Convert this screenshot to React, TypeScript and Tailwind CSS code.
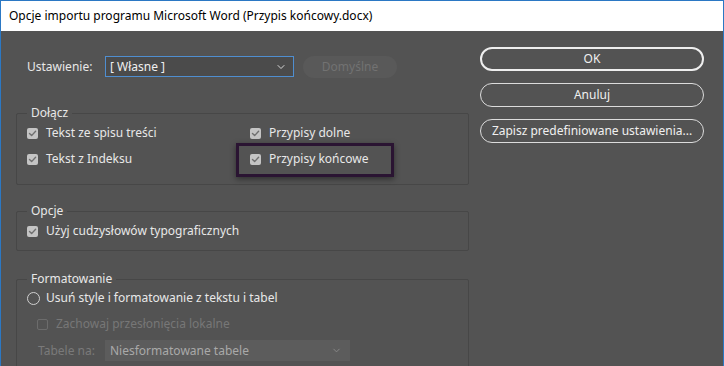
import { ChevronDown } from 'lucide-react'

const FONT = "font-['Noto_Sans','Open_Sans',sans-serif]"

function Check({ disabled }: { disabled?: boolean }) {
  if (disabled) {
    return <span className="w-[11px] h-[11px] shrink-0 rounded-[2px] border border-[#6c6c6c]" />
  }
  return (
    <span className="w-[11px] h-[11px] shrink-0 rounded-[2px] bg-[#c4c4c4] flex items-center justify-center">
      <svg width="9" height="9" viewBox="0 0 9 9" fill="none">
        <path d="M1.5 4.6 L3.6 6.6 L7.6 2.2" stroke="#6f6f6f" strokeWidth="1.4" strokeLinecap="round" strokeLinejoin="round" />
      </svg>
    </span>
  )
}

function CheckRow({ label, disabled }: { label: string; disabled?: boolean }) {
  return (
    <div className="h-[20px] flex items-center gap-[8px]">
      <Check disabled={disabled} />
      <span className={disabled ? 'text-[#777777]' : 'text-[#e8e8e8]'}>{label}</span>
    </div>
  )
}

function Group({ title, children, className }: { title: string; children: React.ReactNode; className?: string }) {
  return (
    <fieldset className={`border border-[#474747] rounded-[2px] pl-[10px] ${className ?? ''}`}>
      <legend className="px-[4px] leading-[16px] text-[#e8e8e8]">{title}</legend>
      {children}
    </fieldset>
  )
}

function PillButton({ label, primary }: { label: string; primary?: boolean }) {
  return (
    <button
      className={`h-[24px] w-full rounded-full text-[#f0f0f0] flex items-center justify-center ${primary ? 'border-2 border-[#eeeeee]' : 'border border-[#dcdcdc]'}`}
    >
      {label}
    </button>
  )
}

export default function App() {
  return (
    <div className={`relative w-[724px] h-[366px] overflow-hidden bg-[#535353] text-[12px] ${FONT} border-l border-r border-t border-[#2b78c4] flex flex-col`}>
      <div className="h-[30px] shrink-0 bg-white flex items-center pl-[8px] text-black text-[12px]">
        Opcje importu programu Microsoft Word (Przypis końcowy.docx)
      </div>

      <div className="flex pl-[15px]">
        <div className="w-[453px] shrink-0 pt-[25px]">
          <div className="h-[21px] flex items-center pl-[11px]">
            <span className="w-[78px] text-[#e8e8e8]">Ustawienie:</span>
            <div className="w-[189px] h-[21px] border border-[#4f8ed0] bg-[#4b4b4b] flex items-center justify-between pl-[4px] pr-[6px] text-[#f0f0f0]">
              <span>[ Własne ]</span>
              <ChevronDown size={12} strokeWidth={2} className="text-[#d8d8d8]" />
            </div>
            <div className="ml-[9px] w-[94px] h-[22px] rounded-full bg-[#595959] flex items-center justify-center text-[#727272]">
              Domyślne
            </div>
          </div>

          <Group title="Dołącz" className="mt-[28px] pb-[15px]">
            <div className="grid grid-cols-[223px_1fr] gap-y-[6px] mt-[2px]">
              <CheckRow label="Tekst ze spisu treści" />
              <CheckRow label="Przypisy dolne" />
              <CheckRow label="Tekst z Indeksu" />
              <CheckRow label="Przypisy końcowe" />
            </div>
          </Group>

          <Group title="Opcje" className="mt-[18px] pb-[9px]">
            <div className="mt-[2px]">
              <CheckRow label="Użyj cudzysłowów typograficznych" />
            </div>
          </Group>

          <Group title="Formatowanie" className="mt-[20px] pb-[20px]">
            <div className="mt-[1px] flex flex-col gap-[6px]">
              <div className="h-[20px] flex items-center gap-[6px]">
                <span className="w-[13px] h-[13px] rounded-full border-[1.5px] border-[#d0d0d0]" />
                <span className="text-[#e8e8e8]">Usuń style i formatowanie z tekstu i tabel</span>
              </div>
              <div className="pl-[10px]">
                <CheckRow label="Zachowaj przesłonięcia lokalne" disabled />
              </div>
              <div className="h-[21px] flex items-center pl-[11px]">
                <span className="w-[67px] text-[#7a7a7a]">Tabele na:</span>
                <div className="w-[245px] h-[21px] bg-[#5c5c5c] flex items-center justify-between pl-[5px] pr-[8px] text-[#a9a9a9]">
                  <span>Niesformatowane tabele</span>
                  <ChevronDown size={11} strokeWidth={2} className="text-[#8a8a8a]" />
                </div>
              </div>
            </div>
          </Group>
        </div>

        <div className="ml-[11px] w-[224px] pt-[16px] flex flex-col gap-[12px]">
          <PillButton label="OK" primary />
          <PillButton label="Anuluj" />
          <PillButton label="Zapisz predefiniowane ustawienia..." />
        </div>
      </div>

      <div className="absolute left-[235px] top-[142px] w-[158px] h-[34px] border-[3px] border-[#2a1432] shadow-[0_2px_6px_rgba(0,0,0,0.45)]" />
    </div>
  )
}
